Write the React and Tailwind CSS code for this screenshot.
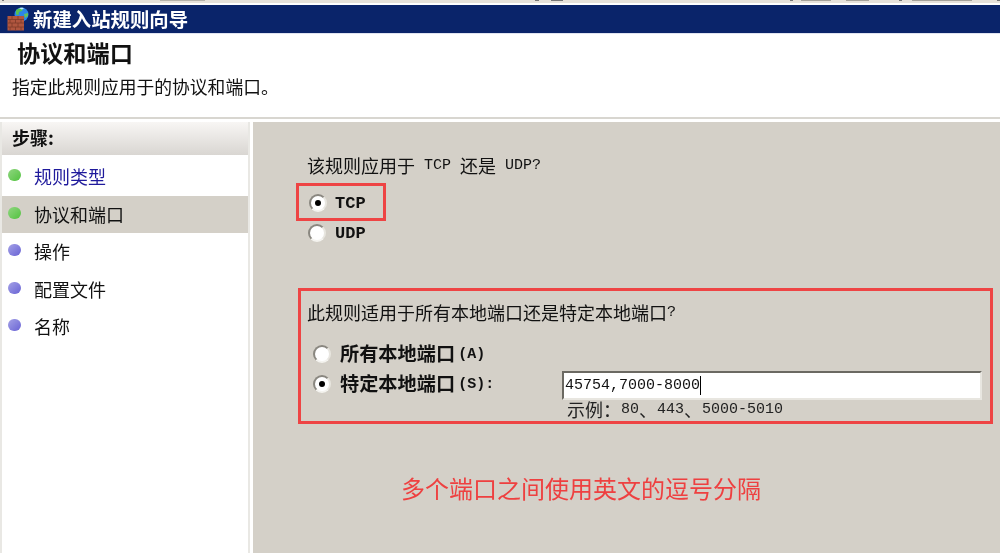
import React from "react";

const cjk = { fontFamily: '"Noto Sans CJK SC", sans-serif' };

const steps = [
  { label: "规则类型", done: true, link: true },
  { label: "协议和端口", done: true, active: true },
  { label: "操作" },
  { label: "配置文件" },
  { label: "名称" },
];

// firewall wizard icon: brick wall with a globe behind it
const WallIcon = () => (
  <svg width="22" height="24" viewBox="0 0 22 24" className="shrink-0">
    <circle cx="14.500" cy="7.500" r="7" fill="#2b86e6" />
    <path d="M9 3.500c2-2 5-3 7-2.500l-1 3-3 1-.5 3-2.500-.500z" fill="#57c04f" />
    <path d="M17 7l4-1v3l-3 2z" fill="#63c25e" />
    <path d="M12 1.200c2-.7 4-.5 5 0l-2 1.300z" fill="#bfe6ff" />
    <rect x="0.500" y="9" width="16.500" height="14.500" fill="#b0563f" />
    <path d="M0.500 12.500h16.500M0.500 16h16.500M0.500 20h16.500M5 9v3.500M11 9v3.500M3 12.500v3.500M8.500 12.500v3.500M14 12.500v3.500M5 16v4M11 16v4M3 20v3.500M8.500 20v3.500M14 20v3.500" stroke="#7d3a2a" strokeWidth="0.800" fill="none" />
  </svg>
);

const Bullet = ({ done }) => (
  <span
    className={
      done
        ? "w-[13px] h-[12px] mb-[3px] rounded-full shrink-0 bg-gradient-to-br from-[#8fd67f] to-[#4fc23c]"
        : "w-[13px] h-[12px] mb-[3px] rounded-full shrink-0 bg-gradient-to-br from-[#a5a1e6] to-[#6a62d4]"
    }
  />
);

const Radio = ({ checked }) => (
  <span className="w-[18px] h-[18px] rounded-full bg-white border-2 border-[#8a8780] border-r-[#e8e6e0] border-b-[#f4f3ef] flex items-center justify-center shrink-0">
    {checked && <span className="w-[6px] h-[6px] rounded-full bg-black" />}
  </span>
);

const Latin = ({ children, className = "" }) => (
  <span className={"text-[15px] whitespace-pre " + className} style={{ fontFamily: '"Liberation Mono", monospace' }}>
    {children}
  </span>
);

const App = () => {
  return (
    <div className="w-[1000px] h-[553px] overflow-hidden flex flex-col bg-white text-[#111] text-[18px] leading-none blur-[0.4px]" style={cjk}>
      {/* clipped window behind, only the feet of its text show */}
      <div className="h-[5px] bg-white shrink-0">
        <div className="h-[3px] bg-[#e6e2da] flex items-start">
          <span className="ml-[2px] w-[2px] h-[1px] bg-[#777]" />
          <span className="ml-[156px] w-[45px] h-[1px] bg-[#b5b2aa]" />
          <span className="ml-[330px] w-[4px] h-[1px] bg-[#777]" />
          <span className="ml-[12px] w-[12px] h-[1px] bg-[#777]" />
          <span className="ml-[227px] w-[3px] h-[1px] bg-[#777]" />
          <span className="ml-[8px] w-[30px] h-[1px] bg-[#a5a29a]" />
          <span className="ml-[15px] w-[24px] h-[1px] bg-[#a5a29a]" />
          <span className="ml-[30px] w-[3px] h-[1px] bg-[#777]" />
          <span className="ml-[10px] w-[60px] h-[1px] bg-[#a5a29a]" />
          <span className="ml-[25px] w-[3px] h-[1px] bg-[#777]" />
        </div>
      </div>

      {/* Title bar */}
      <div className="h-[28px] bg-[#0a246a] flex items-center pl-[7px] gap-[4px] shrink-0">
        <WallIcon />
        <span className="text-white font-bold text-[19.400px] pb-[1px]">新建入站规则向导</span>
      </div>

      {/* Header */}
      <div className="h-[84px] shrink-0 border-t border-[#dfe3f0] pl-[12px] flex flex-col">
        <h1 className="font-bold text-[23.200px] pl-[5px] mt-[7px]">协议和端口</h1>
        <p className="text-[17.800px] mt-[14px]">指定此规则应用于的协议和端口。</p>
      </div>

      <div className="h-[5px] shrink-0 border-t-2 border-[#d8d6d0] bg-white" />

      <div className="flex-1 flex min-h-0">
        {/* Steps */}
        <aside className="w-[250px] shrink-0 pl-[2px] pr-[2px] bg-[#e9e8e4]">
          <div className="h-full bg-white">
            <div className="h-[33px] pb-[4px] bg-gradient-to-b from-[#f8f6f4] to-[#d9d6d2] flex items-center pl-[10px] font-bold text-[18px]">
              步骤:
            </div>
            <ul className="pt-[3px]">
              {steps.map((step) => (
                <li
                  key={step.label}
                  className={
                    step.active
                      ? "h-[37.500px] flex items-center gap-[13px] pl-[6px] bg-[#d4d0c8]"
                      : "h-[37.500px] flex items-center gap-[13px] pl-[6px]"
                  }
                >
                  <Bullet done={step.done} />
                  <span className={step.link ? "text-[#1f1a9c] mb-[1px]" : "mb-[1px]"}>{step.label}</span>
                </li>
              ))}
            </ul>
          </div>
        </aside>

        {/* Main pane */}
        <main className="flex-1 ml-[3px] bg-[#d4d0c8] pl-[43px] pt-[34px]">
          <p className="pl-[11px] h-[18px] flex items-center">
            该规则应用于<Latin> TCP </Latin>还是<Latin> UDP?</Latin>
          </p>

          <div className="mt-[9px] w-[90px] h-[38px] pt-[2px] border-[3px] border-[#ee4444] flex items-center pl-[10px] gap-[8px]">
            <Radio checked />
            <Latin className="font-bold text-[17px]">TCP</Latin>
          </div>
          <div className="h-[24px] flex items-center pl-[12px] gap-[9px]">
            <Radio />
            <Latin className="font-bold text-[17px]">UDP</Latin>
          </div>

          <div className="mt-[43px] ml-[2px] w-[695px] h-[136px] border-[3px] border-[#ee4444] pl-[6px]">
            <p className="mt-[12px] h-[18px] flex items-center">
              此规则适用于所有本地端口还是特定本地端口<Latin>?</Latin>
            </p>
            <div className="mt-[23px] h-[20px] flex items-center pl-[6px] gap-[9px]">
              <Radio />
              <span className="font-bold text-[19.200px]">所有本地端口</span>
              <Latin className="font-bold -ml-[6px]">(A)</Latin>
            </div>
            <div className="mt-[10px] flex items-start pl-[6px]">
              <div className="h-[20px] flex items-center gap-[9px] w-[249px] shrink-0">
                <Radio checked />
                <span className="font-bold text-[19.200px]">特定本地端口</span>
                <Latin className="font-bold -ml-[6px]">(S):</Latin>
              </div>
              <div className="-mt-[3px]">
                <div className="w-[420px] h-[29px] bg-white border-2 border-t-[#6b6962] border-l-[#6b6962] border-b-[#e8e6e0] border-r-[#e8e6e0] flex items-center pl-[1px]">
                  <Latin>45754,7000-8000</Latin>
                  <span className="w-px h-[19px] bg-black" />
                </div>
                <p className="pl-[5px] h-[18px] flex items-center text-[#222]">
                  示例{"\uFF1A"}<Latin>80</Latin>、<Latin>443</Latin>、<Latin>5000-5010</Latin>
                </p>
              </div>
            </div>
          </div>

          <p className="mt-[52px] pl-[105px] text-[24px] text-[#ee4040]">多个端口之间使用英文的逗号分隔</p>
        </main>
      </div>
    </div>
  );
};

export default App;
